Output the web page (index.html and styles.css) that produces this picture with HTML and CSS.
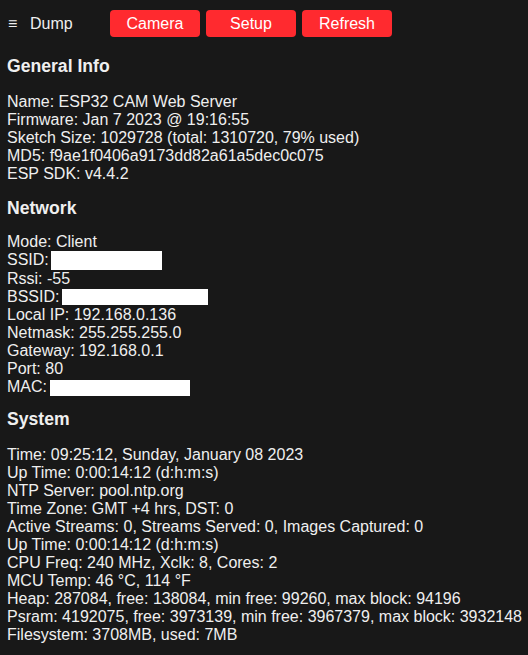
FILE: index.html
```html
<!DOCTYPE html>
<html>
<head>
<meta charset="utf-8">
<link rel="stylesheet" href="styles.css">
</head>
<body>
<header class="topbar">
  <span class="menu">&#8801;</span>
  <span class="title">Dump</span>
  <nav class="buttons">
    <button class="btn">Camera</button>
    <button class="btn">Setup</button>
    <button class="btn">Refresh</button>
  </nav>
</header>
<main class="content">
  <h2 class="heading heading-general">General Info</h2>
  <div class="lines">
    <div>Name: ESP32 CAM Web Server</div>
    <div>Firmware: Jan 7 2023 @ 19:16:55</div>
    <div>Sketch Size: 1029728 (total: 1310720, 79% used)</div>
    <div>MD5: f9ae1f0406a9173dd82a61a5dec0c075</div>
    <div>ESP SDK: v4.4.2</div>
  </div>
  <h2 class="heading heading-network">Network</h2>
  <div class="lines">
    <div>Mode: Client</div>
    <div>SSID:<span class="redact redact-ssid"></span></div>
    <div>Rssi: -55</div>
    <div>BSSID:<span class="redact redact-bssid"></span></div>
    <div>Local IP: 192.168.0.136</div>
    <div>Netmask: 255.255.255.0</div>
    <div>Gateway: 192.168.0.1</div>
    <div>Port: 80</div>
    <div>MAC:<span class="redact redact-mac"></span></div>
  </div>
  <h2 class="heading heading-system">System</h2>
  <div class="lines">
    <div>Time: 09:25:12, Sunday, January 08 2023</div>
    <div>Up Time: 0:00:14:12 (d:h:m:s)</div>
    <div>NTP Server: pool.ntp.org</div>
    <div>Time Zone: GMT +4 hrs, DST: 0</div>
    <div>Active Streams: 0, Streams Served: 0, Images Captured: 0</div>
    <div>Up Time: 0:00:14:12 (d:h:m:s)</div>
    <div>CPU Freq: 240 MHz, Xclk: 8, Cores: 2</div>
    <div>MCU Temp: 46 &deg;C, 114 &deg;F</div>
    <div>Heap: 287084, free: 138084, min free: 99260, max block: 94196</div>
    <div>Psram: 4192075, free: 3973139, min free: 3967379, max block: 3932148</div>
    <div>Filesystem: 3708MB, used: 7MB</div>
  </div>
</main>
</body>
</html>
```
FILE: styles.css
```css
html, body {
  margin: 0;
  padding: 0;
  background: #181818;
  color: #efefef;
  font-family: "Liberation Sans", Arial, sans-serif;
  font-size: 16px;
}
.topbar {
  display: flex;
  align-items: center;
  padding: 10px 7px 3px 7px;
  height: 27px;
}
.menu {
  font-size: 16px;
  width: 22px;
  line-height: 18px;
  padding-left: 1px;
}
.title {
  width: 80px;
  line-height: 18px;
}
.buttons {
  display: flex;
  gap: 6px;
}
.btn {
  width: 90px;
  height: 27px;
  border: none;
  border-radius: 4px;
  background: #ff2a2f;
  color: #ffffff;
  font-family: "Liberation Sans", Arial, sans-serif;
  font-size: 16px;
  padding: 0;
  line-height: 27px;
}
.content {
  padding: 0 7px;
}
.heading {
  font-size: 17.6px;
  font-weight: bold;
  line-height: 20px;
  margin: 16px 0 15px 0;
}
.heading-general {
  margin-bottom: 17px;
}
.heading-network {
  margin-top: 15px;
  margin-bottom: 15px;
}
.heading-system {
  margin-top: 13px;
  margin-bottom: 17px;
}
.lines {
  line-height: 18px;
  white-space: nowrap;
}
.redact {
  display: inline-block;
  background: #ffffff;
  vertical-align: top;
}
.redact-ssid {
  width: 111px;
  height: 19px;
  margin-left: 2px;
}
.redact-bssid {
  width: 146px;
  height: 16px;
  margin-left: 3px;
  margin-top: 1px;
}
.redact-mac {
  width: 140px;
  height: 16px;
  margin-left: 3px;
  margin-top: 2px;
}
```
